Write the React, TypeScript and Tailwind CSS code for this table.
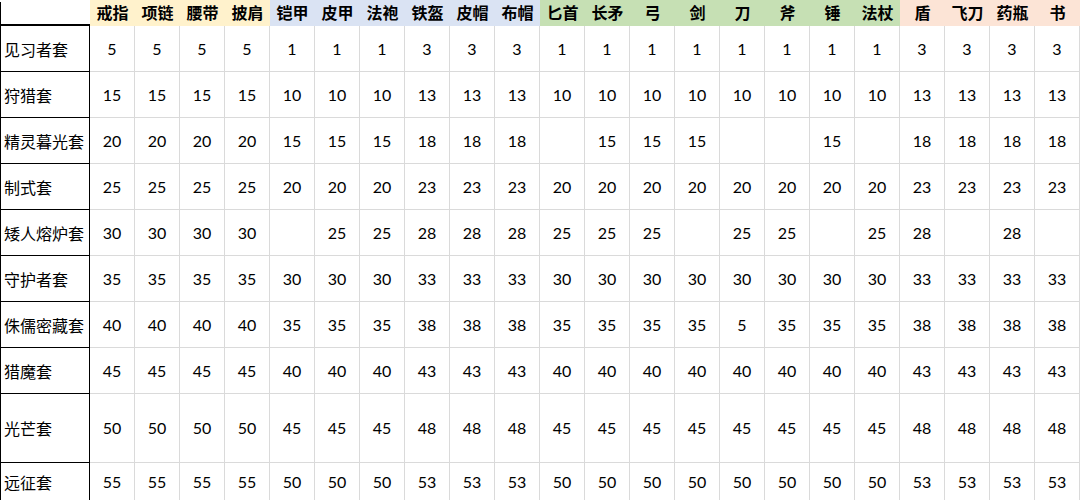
import React from "react"

type Group = { names: string[]; bg: string }

const groups: Group[] = [
  { names: ["戒指", "项链", "腰带", "披肩"], bg: "bg-[#fff2cc]" },
  { names: ["铠甲", "皮甲", "法袍", "铁盔", "皮帽", "布帽"], bg: "bg-[#dae3f3]" },
  { names: ["匕首", "长矛", "弓", "剑", "刀", "斧", "锤", "法杖"], bg: "bg-[#c6e0b4]" },
  { names: ["盾", "飞刀", "药瓶", "书"], bg: "bg-[#fce4d6]" },
]

const headers = groups.flatMap((g) => g.names.map((name) => ({ name, bg: g.bg })))

// empty string = blank cell
const rows: { name: string; values: string[] }[] = [
  { name: "见习者套", values: "5 5 5 5 1 1 1 3 3 3 1 1 1 1 1 1 1 1 3 3 3 3".split(" ") },
  { name: "狩猎套", values: "15 15 15 15 10 10 10 13 13 13 10 10 10 10 10 10 10 10 13 13 13 13".split(" ") },
  { name: "精灵暮光套", values: "20 20 20 20 15 15 15 18 18 18 - 15 15 15 - - 15 - 18 18 18 18".split(" ") },
  { name: "制式套", values: "25 25 25 25 20 20 20 23 23 23 20 20 20 20 20 20 20 20 23 23 23 23".split(" ") },
  { name: "矮人熔炉套", values: "30 30 30 30 - 25 25 28 28 28 25 25 25 - 25 25 - 25 28 - 28 -".split(" ") },
  { name: "守护者套", values: "35 35 35 35 30 30 30 33 33 33 30 30 30 30 30 30 30 30 33 33 33 33".split(" ") },
  { name: "侏儒密藏套", values: "40 40 40 40 35 35 35 38 38 38 35 35 35 35 5 35 35 35 38 38 38 38".split(" ") },
  { name: "猎魔套", values: "45 45 45 45 40 40 40 43 43 43 40 40 40 40 40 40 40 40 43 43 43 43".split(" ") },
  { name: "光芒套", values: "50 50 50 50 45 45 45 48 48 48 45 45 45 45 45 45 45 45 48 48 48 48".split(" ") },
  { name: "远征套", values: "55 55 55 55 50 50 50 53 53 53 50 50 50 50 50 50 50 50 53 53 53 53".split(" ") },
]

export default function App() {
  return (
    <div className="h-[500px] w-[1080px] overflow-hidden bg-white text-black font-['Lato','Noto_Sans_CJK_SC',sans-serif]">
      <div className="grid grid-cols-[90px_repeat(22,45px)] grid-rows-[26px_repeat(8,46px)_69px_38px]">
        {/* header row */}
        <div className="mt-[2px] border-l border-b-2 border-black" />
        {headers.map((h) => (
          <div
            key={h.name}
            className={`${h.bg} flex items-center justify-center pb-[2px] text-[16px] font-bold font-['Noto_Sans_CJK_SC',sans-serif]`}
          >
            {h.name}
          </div>
        ))}

        {rows.map((row) => (
          <React.Fragment key={row.name}>
            <div className="flex items-center border-l border-r border-b border-black pl-[3px] text-[16px] font-['Noto_Sans_CJK_SC',sans-serif]">
              {row.name}
            </div>
            {row.values.map((v, i) => (
              <div
                key={i}
                className="flex items-center justify-center border-r border-b border-[#dadada] text-[16px]"
              >
                {v === "-" ? "" : v}
              </div>
            ))}
          </React.Fragment>
        ))}
      </div>
    </div>
  )
}
